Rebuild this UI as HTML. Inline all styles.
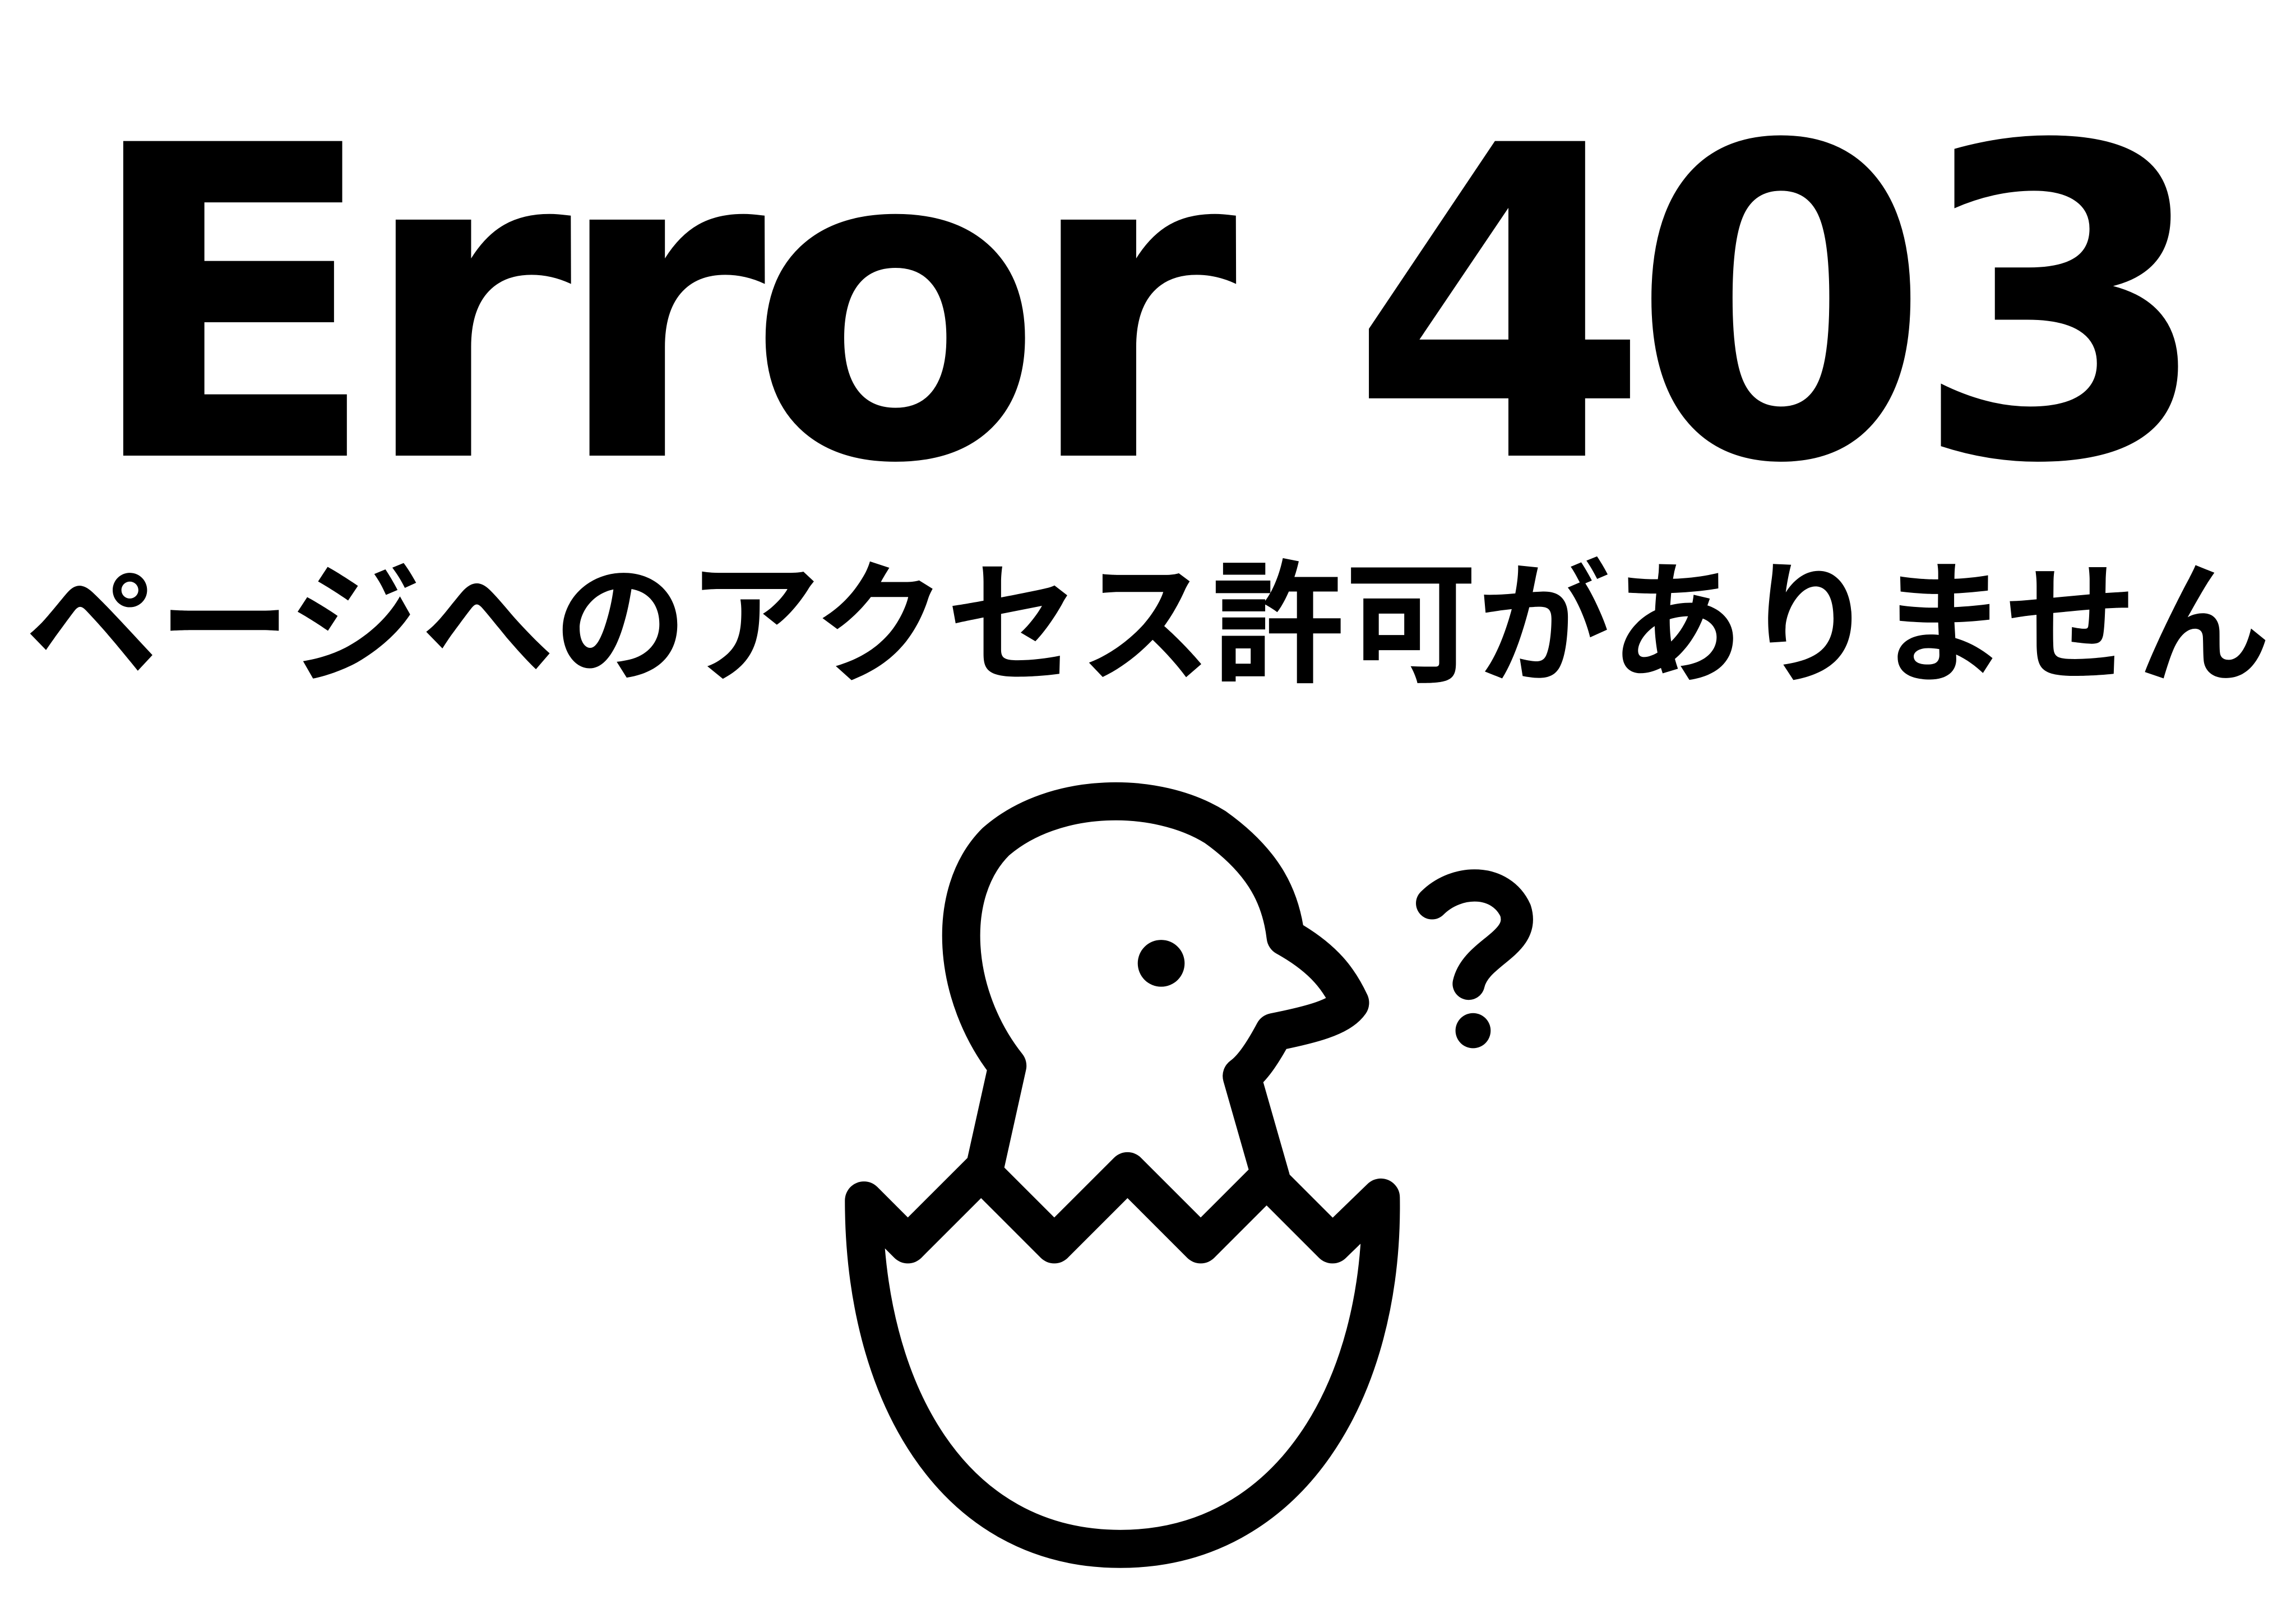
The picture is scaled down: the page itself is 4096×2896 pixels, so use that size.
<!DOCTYPE html>
<html><head><meta charset="utf-8"><style>
html,body{margin:0;padding:0;background:#fff;width:4096px;height:2896px;overflow:hidden;position:relative}
.t{position:absolute;left:0;width:4096px;text-align:center;color:#000;white-space:nowrap}
#e{top:162px;font:bold 770px/1 "DejaVu Sans","Liberation Sans",sans-serif;letter-spacing:-34px;text-indent:-34px}
#j{top:998px;font:bold 237px/1 "Liberation Sans","Noto Sans CJK JP",sans-serif}
svg{position:absolute;left:0;top:0}
</style></head><body>
<div class="t" id="e">Error 403</div>
<div class="t" id="j">ページへのアクセス許可がありません</div>
<svg width="4096" height="2896" viewBox="0 0 1568 1108.6">
<g fill="#fff" stroke="#000" stroke-width="26" stroke-linejoin="round" stroke-linecap="round">
<path d="M672,800 L688,728 C650,680 645,610 680,575 C720,540 790,540 830,565 C865,590 875,615 878,640 C905,655 915,670 922,685 C915,695 895,700 870,705 C862,720 855,730 848,735 L868,805"/>
<path d="M590,820 L620,850 L670,800 L720,850 L770,800 L820,850 L865,805 L910,850 L943,818 C945,950 880,1058 765,1058 C650,1058 590,950 590,820 Z"/>
<path d="M978,617 C995,600 1025,600 1035,622 C1042,645 1008,650 1003,672" fill="none" stroke-width="22"/>
</g>
<circle cx="793" cy="658" r="16" fill="#000"/>
<circle cx="1006" cy="704" r="12" fill="#000"/>
</svg>
</body></html>
